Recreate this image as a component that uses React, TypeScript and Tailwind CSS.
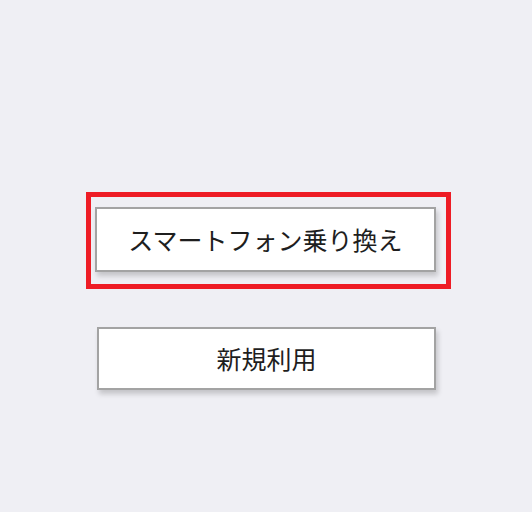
export default function App() {
  const font = { fontFamily: '"Noto Sans CJK JP", "Noto Sans", sans-serif' };

  return (
    <div className="w-[532px] h-[512px] bg-[#efeff4] flex flex-col items-center pt-[192px]" style={font}>
      {/* selected option */}
      <div className="ml-[5px] border-[5px] border-[#ee1c25] pl-[4px] pr-[10px] pt-[10px] pb-[12px]">
        <button className="w-[341px] h-[65px] bg-white border-2 border-[#a3a3a3] shadow-[2px_4px_5px_rgba(0,0,0,0.18)] text-[25px] text-[#1e1e1e]">
          スマートフォン乗り換え
        </button>
      </div>

      <button className="mt-[38px] ml-[1px] w-[339px] h-[63px] bg-white border-2 border-[#a3a3a3] shadow-[2px_4px_5px_rgba(0,0,0,0.18)] text-[25px] text-[#1e1e1e]">
        新規利用
      </button>
    </div>
  );
}
